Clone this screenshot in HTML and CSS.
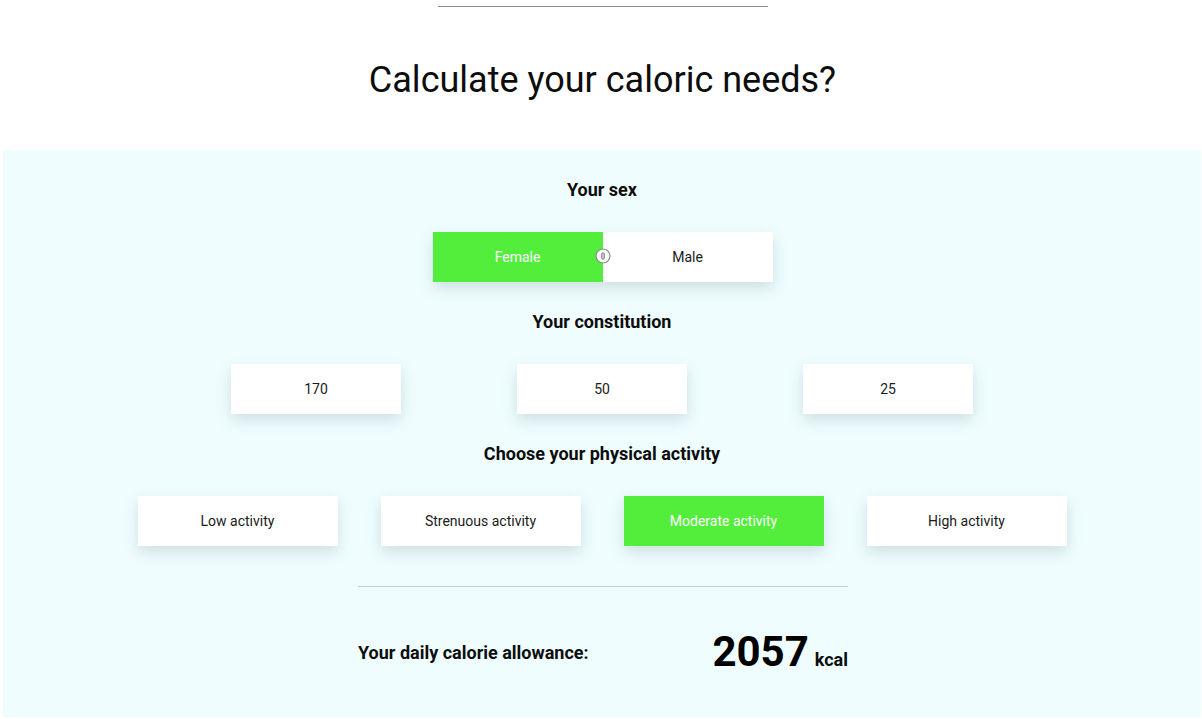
FILE: index.html
```html
<!DOCTYPE html>
<html lang="en">
<head>
<meta charset="utf-8">
<title>Calorie calculator</title>
<link rel="stylesheet" href="styles.css">
</head>
<body>
<div class="top-rule"></div>
<h1 class="title">Calculate your caloric needs?</h1>
<section class="calc">
  <h2 class="heading">Your sex</h2>
  <div class="toggle">
    <button class="toggle-opt active">Female</button>
    <button class="toggle-opt">Male</button>
    <svg class="knob" width="16" height="16" viewBox="0 0 16 16">
      <circle cx="8" cy="8" r="7" fill="#fff" stroke="#8a8a8a" stroke-width="1.2"/>
      <rect x="6.6" y="4.8" width="2.8" height="6.4" rx="1.4" fill="none" stroke="#8a8a8a" stroke-width="1"/>
      <line x1="8" y1="5" x2="8" y2="11" stroke="#8a8a8a" stroke-width="1"/>
    </svg>
  </div>
  <h2 class="heading">Your constitution</h2>
  <div class="constitution">
    <div class="box">170</div>
    <div class="box">50</div>
    <div class="box">25</div>
  </div>
  <h2 class="heading">Choose your physical activity</h2>
  <div class="activities">
    <button class="box wide">Low activity</button>
    <button class="box wide">Strenuous activity</button>
    <button class="box wide active">Moderate activity</button>
    <button class="box wide">High activity</button>
  </div>
  <hr class="divider">
  <div class="result">
    <span class="result-label">Your daily calorie allowance:</span>
    <span class="result-value"><span class="num">2057</span><span class="unit">kcal</span></span>
  </div>
</section>
</body>
</html>
```
FILE: styles.css
```css
html, body {
  margin: 0;
  padding: 0;
  background: #ffffff;
}
body {
  font-family: Roboto, "Liberation Sans", sans-serif;
  color: #111;
  width: 1202px;
  height: 719px;
  overflow: hidden;
}
.top-rule {
  width: 330px;
  height: 1px;
  background: #8a8a8a;
  margin: 6px 0 0 438px;
}
.title {
  margin: 0;
  padding-top: 52px;
  height: 143px;
  box-sizing: border-box;
  text-align: center;
  font-weight: 400;
  font-size: 36px;
  line-height: 42px;
  color: #0d0d0d;
  padding-left: 3px;
}
.calc {
  margin: 0 1px 0 3px;
  background: #effdfe;
  height: 567px;
  box-sizing: border-box;
  padding-top: 29px;
  display: flex;
  flex-direction: column;
  align-items: center;
}
.heading {
  margin: 0 0 31px;
  font-size: 18px;
  line-height: 22px;
  font-weight: 700;
  color: #0d0d0d;
  text-align: center;
}
button {
  font: inherit;
  border: 0;
  padding: 0;
  cursor: pointer;
}
.toggle {
  position: relative;
  display: flex;
  width: 340px;
  height: 50px;
  margin-bottom: 29px;
  margin-left: 1px;
  box-shadow: 0 6px 14px rgba(60, 90, 100, 0.18);
}
.toggle-opt {
  flex: 1;
  background: #fff;
  font-size: 14px;
  color: #1a1a1a;
}
.toggle-opt.active {
  background: #52ee3b;
  color: #fff;
}
.knob {
  position: absolute;
  left: 162px;
  top: 16px;
}
.constitution {
  display: flex;
  gap: 116px;
  margin-bottom: 29px;
}
.box {
  width: 170px;
  height: 50px;
  background: #fff;
  display: flex;
  align-items: center;
  justify-content: center;
  font-size: 14px;
  color: #1a1a1a;
  box-shadow: 0 6px 14px rgba(60, 90, 100, 0.18);
}
.activities {
  display: flex;
  gap: 43px;
}
.activities .box.wide {
  width: 200px;
}
.box.active {
  background: #52ee3b;
  color: #fff;
}
.divider {
  width: 490px;
  height: 0;
  border: 0;
  border-top: 1px solid #c3cfd2;
  margin: 40px 0 0 2px;
}
.result {
  width: 490px;
  display: flex;
  justify-content: space-between;
  align-items: center;
  margin: 42px 0 0 2px;
}
.result-label {
  font-size: 18px;
  font-weight: 700;
  color: #0d0d0d;
}
.result-value {
  display: flex;
  align-items: baseline;
  gap: 6px;
}
.num {
  font-size: 42px;
  line-height: 46px;
  font-weight: 700;
  color: #000;
}
.unit {
  font-size: 18px;
  font-weight: 700;
  color: #0d0d0d;
}
```
